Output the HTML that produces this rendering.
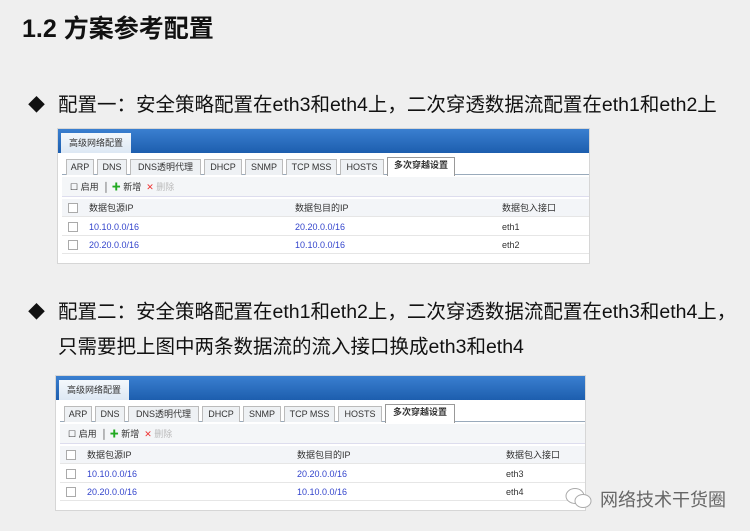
<!DOCTYPE html>
<html><head><meta charset="utf-8"><style>
*{margin:0;padding:0;box-sizing:border-box}
body{width:750px;height:531px;background:#efefef;font-family:"Liberation Sans","Noto Sans CJK SC",sans-serif;position:relative;overflow:hidden;color:#111}
.t{position:absolute;left:22px;top:9px;font-size:25px;font-weight:bold;color:#111}
.b{position:absolute;left:28px;font-size:19.5px;color:#111;line-height:28px;white-space:nowrap}
.b span.d{display:inline-block;width:30px;font-size:17px}
.ss{position:absolute;background:#fff;border:1px solid #d6d6d6;font-size:9px;color:#333;overflow:hidden}
.hd{position:absolute;left:0;right:0;top:0;height:24px;background:linear-gradient(#3a7fd0,#1d5eae);}
.ht{position:absolute;left:3px;top:4px;height:20px;width:70px;background:linear-gradient(#f4f8fc,#dde8f4);font-size:9px;line-height:20px;text-align:center;color:#333}
.tabs{position:absolute;left:4px;right:0;top:28px;height:18px;border-bottom:1px solid #9ab}
.tab{position:absolute;top:2px;height:16px;border:1px solid #bbb;border-bottom:none;background:#eef1f4;text-align:center;line-height:15px;font-size:9px}
.tab.a{top:0;height:19px;background:#fff;font-weight:bold;border-color:#999}
.tb{position:absolute;left:4px;right:0;top:48px;height:20px;background:#f4f6f8;border-bottom:1px solid #dde;line-height:20px;padding-left:8px;font-size:9px}
.row{position:absolute;left:4px;right:0;height:18px;line-height:18px;border-bottom:1px solid #e6e6e6}
.row.h{background:#f3f5f8}
.cb{position:absolute;left:6px;top:4px;width:10px;height:10px;border:1px solid #aaa;background:#fff}
.c{position:absolute;top:0}
.bl{color:#3344cc}
</style></head><body>
<div class="t">1.2 方案参考配置</div>
<div class="b" style="top:91px"><span class="d">◆</span>配置一：安全策略配置在eth3和eth4上，二次穿透数据流配置在eth1和eth2上</div>
<div class="b" style="top:298px"><span class="d">◆</span>配置二：安全策略配置在eth1和eth2上，二次穿透数据流配置在eth3和eth4上，</div>
<div class="b" style="top:333px;left:58px">只需要把上图中两条数据流的流入接口换成eth3和eth4</div>

<div class="ss" style="left:57px;top:128px;width:533px;height:136px">
 <div class="hd"></div><div class="ht">高级网络配置</div>
 <div class="tabs">
  <div class="tab" style="left:4px;width:28px">ARP</div>
  <div class="tab" style="left:35px;width:30px">DNS</div>
  <div class="tab" style="left:68px;width:71px">DNS透明代理</div>
  <div class="tab" style="left:142px;width:38px">DHCP</div>
  <div class="tab" style="left:183px;width:38px">SNMP</div>
  <div class="tab" style="left:224px;width:51px">TCP MSS</div>
  <div class="tab" style="left:278px;width:44px">HOSTS</div>
  <div class="tab a" style="left:325px;width:68px">多次穿越设置</div>
 </div>
 <div class="tb">☐ 启用 &nbsp;│ <span style="color:#2a2;font-weight:bold">✚</span> 新增 &nbsp;<span style="color:#e33">✕</span> <span style="color:#bbb">删除</span></div>
 <div class="row h" style="top:70px"><div class="cb"></div><div class="c" style="left:27px">数据包源IP</div><div class="c" style="left:233px">数据包目的IP</div><div class="c" style="left:440px">数据包入接口</div></div>
 <div class="row" style="top:89px"><div class="cb"></div><div class="c bl" style="left:27px">10.10.0.0/16</div><div class="c bl" style="left:233px">20.20.0.0/16</div><div class="c" style="left:440px">eth1</div></div>
 <div class="row" style="top:107px"><div class="cb"></div><div class="c bl" style="left:27px">20.20.0.0/16</div><div class="c bl" style="left:233px">10.10.0.0/16</div><div class="c" style="left:440px">eth2</div></div>
</div>

<div class="ss" style="left:55px;top:375px;width:531px;height:136px">
 <div class="hd"></div><div class="ht">高级网络配置</div>
 <div class="tabs">
  <div class="tab" style="left:4px;width:28px">ARP</div>
  <div class="tab" style="left:35px;width:30px">DNS</div>
  <div class="tab" style="left:68px;width:71px">DNS透明代理</div>
  <div class="tab" style="left:142px;width:38px">DHCP</div>
  <div class="tab" style="left:183px;width:38px">SNMP</div>
  <div class="tab" style="left:224px;width:51px">TCP MSS</div>
  <div class="tab" style="left:278px;width:44px">HOSTS</div>
  <div class="tab a" style="left:325px;width:70px">多次穿越设置</div>
 </div>
 <div class="tb">☐ 启用 &nbsp;│ <span style="color:#2a2;font-weight:bold">✚</span> 新增 &nbsp;<span style="color:#e33">✕</span> <span style="color:#bbb">删除</span></div>
 <div class="row h" style="top:70px"><div class="cb"></div><div class="c" style="left:27px">数据包源IP</div><div class="c" style="left:237px">数据包目的IP</div><div class="c" style="left:446px">数据包入接口</div></div>
 <div class="row" style="top:89px"><div class="cb"></div><div class="c bl" style="left:27px">10.10.0.0/16</div><div class="c bl" style="left:237px">20.20.0.0/16</div><div class="c" style="left:446px">eth3</div></div>
 <div class="row" style="top:107px"><div class="cb"></div><div class="c bl" style="left:27px">20.20.0.0/16</div><div class="c bl" style="left:237px">10.10.0.0/16</div><div class="c" style="left:446px">eth4</div></div>
</div>

<svg style="position:absolute;left:564px;top:486px" width="30" height="26" viewBox="0 0 30 26">
 <ellipse cx="11" cy="10" rx="9" ry="7.5" fill="#fff" stroke="#aaa" stroke-width="1"/>
 <ellipse cx="19" cy="15" rx="8" ry="6.5" fill="#fff" stroke="#aaa" stroke-width="1"/>
</svg>
<div style="position:absolute;left:600px;top:486px;font-size:18px;color:#666">网络技术干货圈</div>
</body></html>
